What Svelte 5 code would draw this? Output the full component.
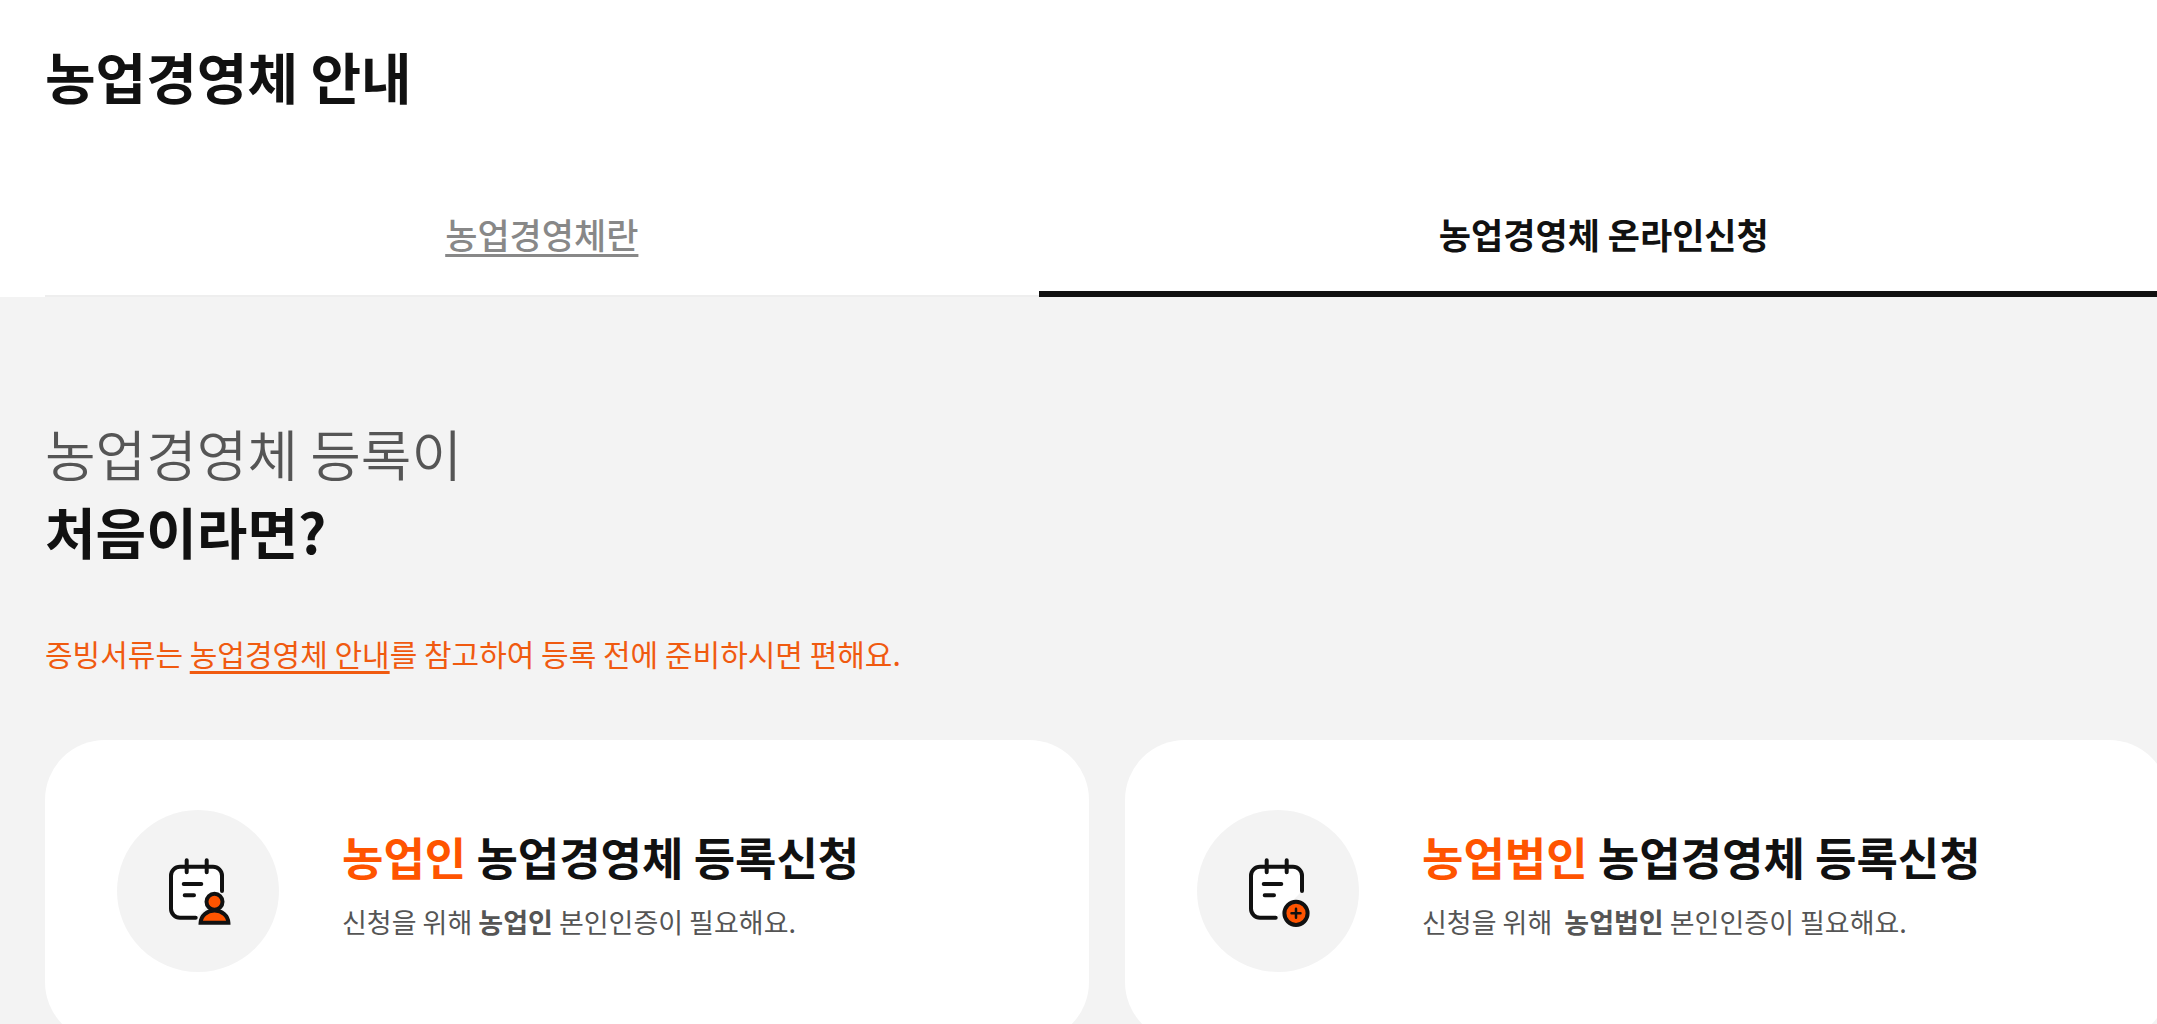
<script>
  const tabs = [
    { id: 'about', label: '농업경영체란' },
    { id: 'online', label: '농업경영체 온라인신청' },
  ];

  const cards = [
    { type: 'person', who: '농업인', before: '신청을 위해 ' },
    { type: 'corp', who: '농업법인', before: '신청을 위해 \u00a0' },
  ];

  let current = $state('online');

  function selectTab(event, id) {
    event.preventDefault();
    current = id;
  }
</script>

<div class="page">
  <header class="page-head">
    <div class="inner">
      <h1>농업경영체 안내</h1>
      <nav class="tabs">
        {#each tabs as tab (tab.id)}
          <a
            href="#{tab.id}"
            class="tab"
            class:active={current === tab.id}
            aria-current={current === tab.id ? 'page' : undefined}
            onclick={(event) => selectTab(event, tab.id)}
          >{tab.label}</a>
        {/each}
      </nav>
    </div>
  </header>

  <main class="content">
    <div class="inner">
      <h2>농업경영체 등록이<br /><strong>처음이라면?</strong></h2>
      <p class="guide">증빙서류는 <a href="#guide">농업경영체 안내</a>를 참고하여 등록 전에 준비하시면 편해요.</p>

      <div class="cards">
        {#each cards as card (card.type)}
          <a href="#{card.type}" class="card">
            <span class="icon">
              <svg viewBox="0 0 72 72" fill="none" stroke="#111" stroke-width="4" stroke-linecap="round" aria-hidden="true">
                <path fill="#fff" stroke="none" d="M18 11.7H51a9 9 0 0 1 9 9V36L34 62.7H18a9 9 0 0 1-9-9V20.700a9 9 0 0 1 9-9z" />
                <path d="M60 36V20.700a9 9 0 0 0-9-9H18a9 9 0 0 0-9 9V53.700a9 9 0 0 0 9 9H33.700" />
                <path d="M24.700 5.300V17.300M44.700 5.300V17.300M21.700 29H39.300M22.700 40.300H32" />
                {#if card.type === 'person'}
                  <path fill="#ff5400" d="M38.600 67.700C39 60.500 45 55.500 52.500 55.500S66 60.500 66.400 67.700z" />
                  <circle cx="52.500" cy="46.700" r="8" fill="#ff5400" />
                {:else}
                  <circle cx="54" cy="58.300" r="11.600" fill="#ff5400" />
                  <path stroke-width="2.500" d="M49.500 58.300H58.500M54 53.800V62.800" />
                {/if}
              </svg>
            </span>
            <span class="text">
              <strong class="card-title"><em>{card.who}</em> 농업경영체 등록신청</strong>
              <span class="card-desc">{card.before}<b>{card.who}</b> 본인인증이 필요해요.</span>
            </span>
          </a>
        {/each}
      </div>
    </div>
  </main>
</div>

<style>
  :global(body) {
    margin: 0;
    background: #f3f3f3;
  }

  .page {
    overflow: hidden;
    font-family: "Noto Sans CJK KR", sans-serif;
    color: #111;
    word-break: keep-all;
  }

  .inner {
    margin: 0 -12px 0 45px;
  }

  .page-head {
    padding-top: 36px;
    background: #fff;
  }

  h1 {
    margin: 0;
    font-size: 55px;
    line-height: 78px;
    font-weight: 700;
  }

  .tabs {
    display: flex;
    margin-top: 62px;
  }

  .tab {
    box-sizing: border-box;
    flex: 1 1 auto;
    height: 121px;
    border-bottom: 2px solid #eee;
    font-size: 35px;
    line-height: 116px;
    font-weight: 500;
    text-align: center;
    color: #888;
    text-decoration: underline;
    text-decoration-thickness: 3px;
    text-underline-offset: 5px;
  }

  .tab.active {
    border-bottom: 6px solid #111;
    font-weight: 700;
    color: #111;
    text-decoration: none;
  }

  .content {
    padding: 116px 0 72px;
    background: #f3f3f3;
  }

  h2 {
    margin: 0;
    font-size: 55px;
    line-height: 78px;
    font-weight: 350;
    color: #555;
  }

  h2 strong {
    font-weight: 700;
    color: #111;
  }

  .guide {
    margin: 62px 0 65px;
    font-size: 30px;
    line-height: 44px;
    color: #f05a10;
  }

  .guide a {
    color: inherit;
    text-decoration-thickness: 3px;
    text-underline-offset: 5px;
  }

  .cards {
    display: grid;
    grid-template-columns: 1fr 1fr;
    gap: 36px;
  }

  .card {
    display: flex;
    align-items: center;
    gap: 63px;
    padding: 70px 72px;
    border-radius: 60px;
    background: #fff;
    color: #111;
    text-decoration: none;
  }

  .icon {
    display: flex;
    flex: none;
    align-items: center;
    justify-content: center;
    width: 162px;
    height: 162px;
    border-radius: 50%;
    background: #f3f3f3;
  }

  .icon svg {
    width: 72px;
    height: 72px;
  }

  .text {
    display: flex;
    flex-direction: column;
    gap: 12px;
    padding-bottom: 16px;
  }

  .card-title {
    font-size: 45px;
    line-height: 66px;
    font-weight: 700;
  }

  .card-title em {
    font-style: normal;
    color: #ff5400;
  }

  .card-desc {
    font-size: 27px;
    line-height: 40px;
    color: #555;
  }
</style>
